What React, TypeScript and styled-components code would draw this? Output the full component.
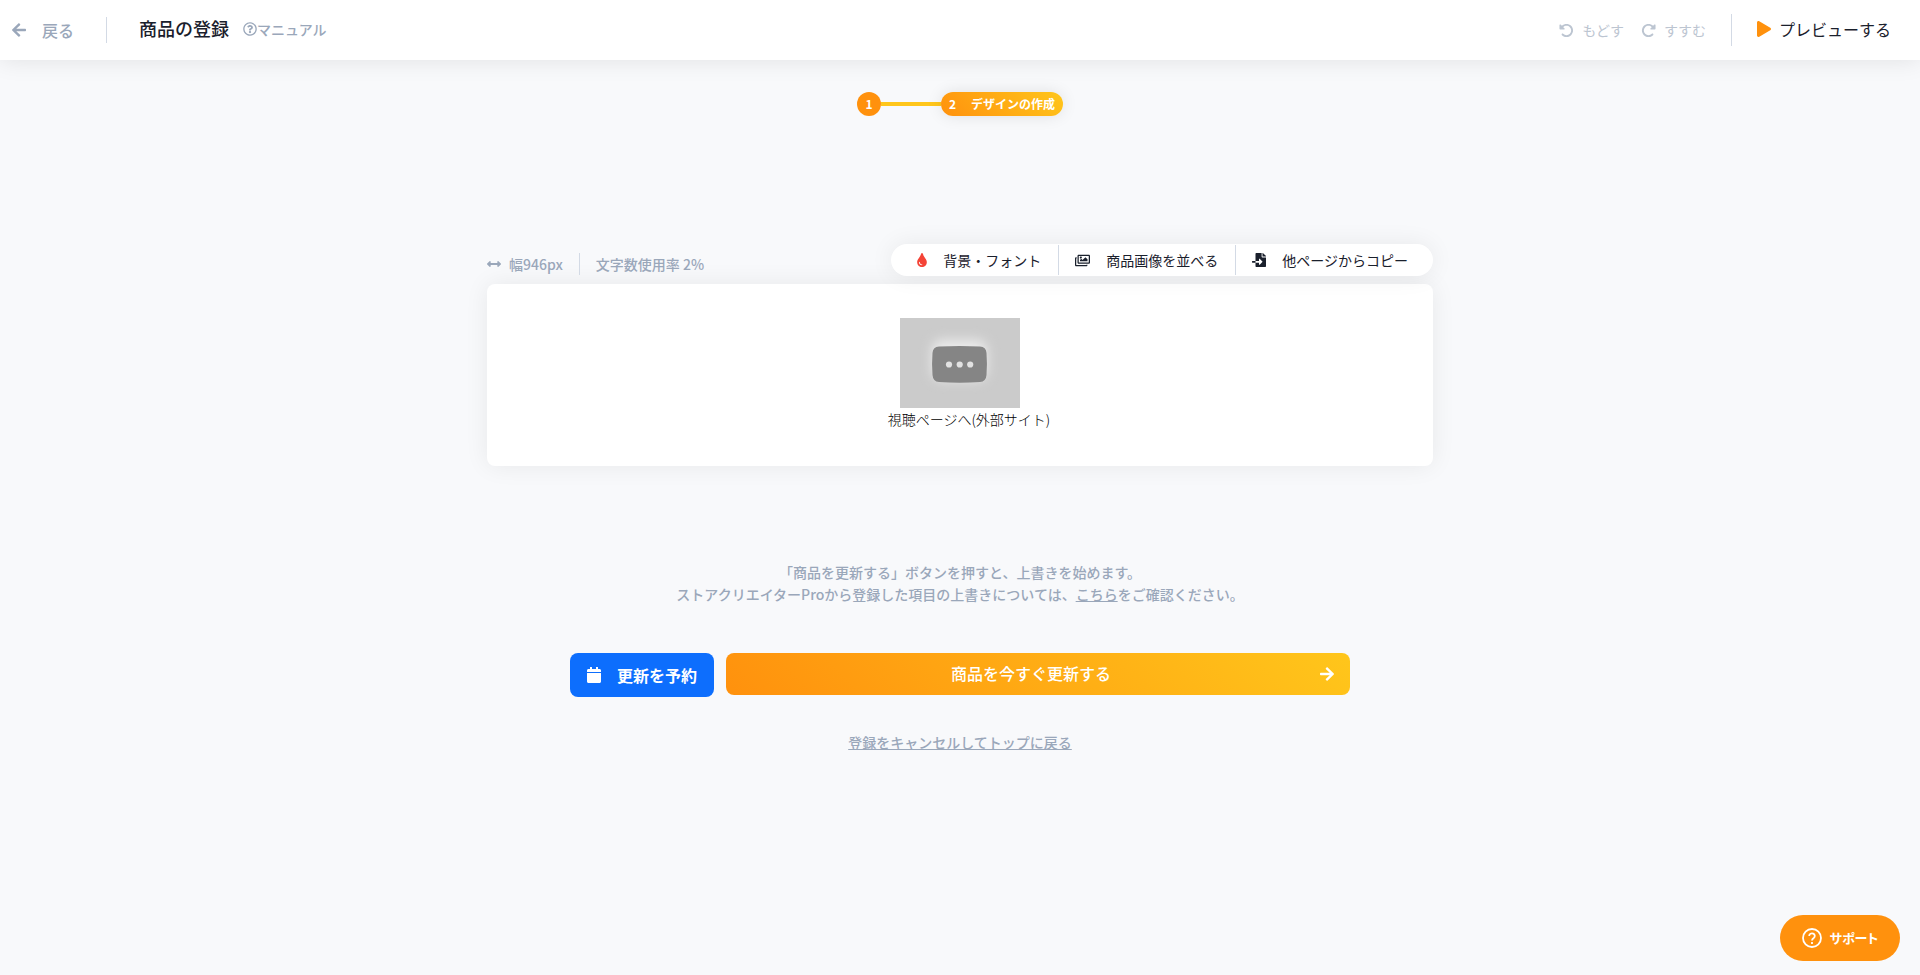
import React from "react";
import styled, { createGlobalStyle, css } from "styled-components";
import {
  FaArrowLeft,
  FaArrowRight,
  FaArrowsAltH,
  FaCalendar,
  FaFileImport,
  FaPlay,
  FaRegImages,
  FaRegQuestionCircle,
  FaTint,
} from "react-icons/fa";
import { FaRotateLeft, FaRotateRight } from "react-icons/fa6";

const color = {
  ink: "#1a202c",
  muted: "#9aa7ba",
  faint: "#bcc5d1",
  line: "#d3dae5",
  orange: "#ff910d",
  yellow: "#ffc61b",
  blue: "#0d6efd",
};
const gradient = `linear-gradient(45deg, ${color.orange}, ${color.yellow})`;

const GlobalStyle = createGlobalStyle`
  *, *::before, *::after { box-sizing: border-box; }
  body {
    margin: 0;
    background: #f8f9fb;
    color: ${color.ink};
    font: 400 14px/22px "Noto Sans CJK JP", "Noto Sans", sans-serif;
  }
  svg { display: block; flex: none; }
  p { margin: 0; }
`;

const bareButton = css`
  display: flex;
  align-items: center;
  border: 0;
  padding: 0;
  background: none;
  font: inherit;
  color: inherit;
  cursor: pointer;
`;

const tallIcon = css`
  svg {
    width: 14px;
    height: 16px;
  }
`;

const Header = styled.header`
  display: flex;
  align-items: center;
  height: 60px;
  padding: 0 29px 0 12px;
  background: #fff;
  box-shadow: 0 0 24px rgba(0, 0, 0, 0.1);
`;

const BackLink = styled.a`
  display: flex;
  align-items: center;
  gap: 16px;
  color: ${color.muted};
  font-size: 16px;
  font-weight: 500;
  text-decoration: none;
  ${tallIcon}
`;

const Divider = styled.span<{ $height: number; $gap: number }>`
  width: 1px;
  height: ${(p) => p.$height}px;
  margin: 0 ${(p) => p.$gap}px;
  background: ${color.line};
`;

const Title = styled.h1`
  margin: 0 14px 0 0;
  padding-bottom: 4px;
  font-size: 18px;
  line-height: 26px;
  font-weight: 500;
`;

const ManualLink = styled.a`
  display: flex;
  align-items: center;
  padding-bottom: 2px;
  color: ${color.muted};
  font-weight: 500;
  text-decoration: none;
`;

const HeaderActions = styled.div`
  display: flex;
  align-items: center;
  margin-left: auto;
`;

const HistoryButton = styled.button`
  ${bareButton}
  gap: 8px;
  margin-left: 17px;
  color: ${color.faint};
`;

const PreviewButton = styled.button`
  ${bareButton}
  gap: 8px;
  padding-bottom: 2px;
  font-size: 16px;
  ${tallIcon}
  svg { color: ${color.orange}; }
`;

const Main = styled.main`
  display: flex;
  flex-direction: column;
  align-items: center;
  padding: 32px 20px;
`;

const Steps = styled.ol`
  display: flex;
  align-items: center;
  margin: 0 0 128px;
  padding: 0;
  list-style: none;
  color: #fff;
  font-size: 12px;
  font-weight: 700;
  line-height: 24px;
`;

const StepDot = styled.li`
  width: 24px;
  border-radius: 12px;
  background: ${color.orange};
  text-align: center;
`;

const StepLine = styled.li`
  width: 60px;
  height: 4px;
  background: ${color.yellow};
`;

const StepCurrent = styled.li`
  display: flex;
  gap: 15px;
  padding: 0 8px;
  border-radius: 12px;
  background: ${gradient};
  box-shadow: 0 0 16px rgba(0, 0, 0, 0.1);
`;

const Editor = styled.section`
  width: 100%;
  max-width: 946px;
`;

const EditorBar = styled.div`
  display: flex;
  justify-content: space-between;
  margin-bottom: 8px;
`;

const Stats = styled.div`
  display: flex;
  align-items: center;
  height: 22px;
  margin-top: 9px;
  color: ${color.muted};
  font-weight: 500;
  svg { margin-right: 8px; }
`;

const Toolbar = styled.div`
  display: flex;
  align-items: center;
  height: 32px;
  padding: 0 8px 0 10px;
  border-radius: 16px;
  background: #fff;
  box-shadow: 0 0 24px rgba(0, 0, 0, 0.07);
`;

const Tool = styled.button<{ $color?: string; $iconWidth: number }>`
  ${bareButton}
  gap: 16px;
  height: 30px;
  padding: 0 17px 0 16px;
  & + & { border-left: 1px solid ${color.line}; }
  svg {
    width: ${(p) => p.$iconWidth}px;
    color: ${(p) => p.$color ?? color.ink};
  }
`;

const Canvas = styled.div`
  display: flex;
  flex-direction: column;
  align-items: center;
  height: 182px;
  padding-top: 34px;
  border-radius: 8px;
  background: #fff;
  box-shadow: 0 0 24px rgba(0, 0, 0, 0.07);
`;

const WatchText = styled.p`
  padding-left: 18px;
  font-weight: 300;
  color: #000;
`;

const Note = styled.p`
  margin-top: 95px;
  color: ${color.muted};
  font-weight: 500;
  text-align: center;
`;

const TextLink = styled.a`
  color: inherit;
  text-decoration: underline;
`;

const Submit = styled.div`
  display: flex;
  align-items: flex-start;
  gap: 12px;
  width: 100%;
  max-width: 780px;
  margin: 48px 0 34px;
`;

const ReserveButton = styled.button`
  ${bareButton}
  gap: 16px;
  height: 44px;
  padding: 0 17px;
  border-radius: 8px;
  background: ${color.blue};
  color: #fff;
  font-size: 16px;
  font-weight: 700;
  ${tallIcon}
`;

const UpdateButton = styled.button`
  ${bareButton}
  flex: 1;
  height: 42px;
  padding: 0 16px;
  border-radius: 8px;
  background: ${gradient};
  color: #fff;
  font-size: 16px;
  font-weight: 500;
  ${tallIcon}
  span { flex: 1; padding-bottom: 2px; }
`;

const CancelLink = styled(TextLink)`
  color: ${color.muted};
  font-weight: 500;
`;

const SupportButton = styled.button`
  ${bareButton}
  position: fixed;
  right: 20px;
  bottom: 14px;
  justify-content: center;
  gap: 8px;
  width: 120px;
  height: 46px;
  border-radius: 23px;
  background: ${color.orange};
  color: #fff;
  font-size: 13px;
  font-weight: 700;
  font-feature-settings: "palt";
`;

const VideoThumb = () => (
  <svg width="120" height="90" viewBox="0 0 120 90" role="img" aria-label="動画">
    <defs>
      <filter id="glow" x="-50%" y="-50%" width="200%" height="200%">
        <feGaussianBlur stdDeviation="6" />
      </filter>
    </defs>
    <rect width="120" height="90" fill="#cbcbcb" />
    <rect x="32" y="22" width="55" height="40" rx="10" fill="#ececec" filter="url(#glow)" />
    <path
      d="M39 28.600Q60 27.400 80 28.600Q86 29 86.500 35Q87.400 46 86.500 57Q86 63.500 80 64Q60 65.300 39 64Q33 63.500 32.500 57Q31.600 46 32.500 35Q33 29 39 28.600Z"
      fill="#858585"
    />
    <g fill="#e2e2e2">
      <circle cx="49" cy="46.500" r="3.100" />
      <circle cx="59.700" cy="46.500" r="3.100" />
      <circle cx="70.200" cy="46.500" r="3.100" />
    </g>
  </svg>
);

const SupportIcon = () => (
  <svg width="20" height="20" viewBox="0 0 20 20" fill="none" stroke="#fff" strokeWidth="1.800" aria-hidden>
    <circle cx="10" cy="10" r="9" />
    <path d="M7.200 8a2.800 2.600 0 1 1 4.500 2Q10 11.100 10 12.600" />
    <path d="M10 14v2" />
  </svg>
);

export default function App() {
  return (
    <>
      <GlobalStyle />
      <Header>
        <BackLink href="#back">
          <FaArrowLeft />
          戻る
        </BackLink>
        <Divider $height={26} $gap={32} />
        <Title>商品の登録</Title>
        <ManualLink href="#manual">
          <FaRegQuestionCircle size={14} />
          マニュアル
        </ManualLink>
        <HeaderActions>
          <HistoryButton type="button">
            <FaRotateLeft size={15} />
            もどす
          </HistoryButton>
          <HistoryButton type="button">
            <FaRotateRight size={15} />
            すすむ
          </HistoryButton>
          <Divider $height={32} $gap={25} />
          <PreviewButton type="button">
            <FaPlay />
            プレビューする
          </PreviewButton>
        </HeaderActions>
      </Header>
      <Main>
        <Steps>
          <StepDot>1</StepDot>
          <StepLine aria-hidden />
          <StepCurrent aria-current="step">
            <span>2</span>
            <span>デザインの作成</span>
          </StepCurrent>
        </Steps>
        <Editor>
          <EditorBar>
            <Stats>
              <FaArrowsAltH size={14} />
              <span>幅946px</span>
              <Divider $height={22} $gap={16} />
              <span>文字数使用率 2%</span>
            </Stats>
            <Toolbar>
              <Tool type="button" $color="#f44336" $iconWidth={10}>
                <FaTint size={14} />
                背景・フォント
              </Tool>
              <Tool type="button" $iconWidth={15}>
                <FaRegImages size={15} />
                商品画像を並べる
              </Tool>
              <Tool type="button" $iconWidth={14}>
                <FaFileImport size={14} />
                他ページからコピー
              </Tool>
            </Toolbar>
          </EditorBar>
          <Canvas>
            <VideoThumb />
            <WatchText>視聴ページへ(外部サイト)</WatchText>
          </Canvas>
        </Editor>
        <Note>
          「商品を更新する」ボタンを押すと、上書きを始めます。
          <br />
          ストアクリエイターProから登録した項目の上書きについては、
          <TextLink href="#help">こちら</TextLink>をご確認ください。
        </Note>
        <Submit>
          <ReserveButton type="button">
            <FaCalendar />
            更新を予約
          </ReserveButton>
          <UpdateButton type="button">
            <span>商品を今すぐ更新する</span>
            <FaArrowRight />
          </UpdateButton>
        </Submit>
        <CancelLink href="#top">登録をキャンセルしてトップに戻る</CancelLink>
      </Main>
      <SupportButton type="button">
        <SupportIcon />
        サポート
      </SupportButton>
    </>
  );
}
